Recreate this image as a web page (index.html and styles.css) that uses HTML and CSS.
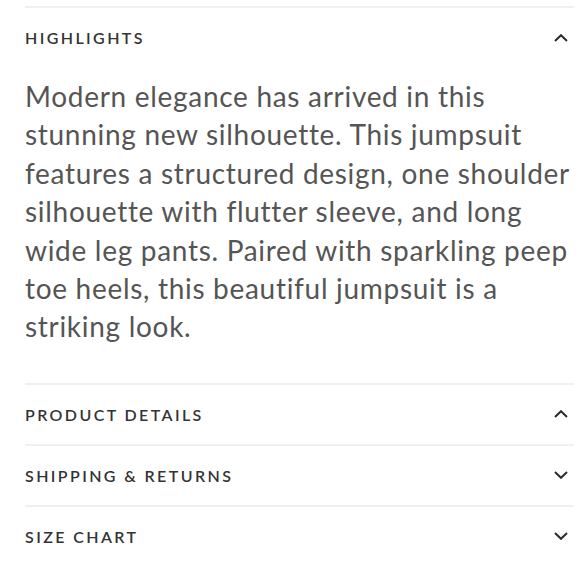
FILE: index.html
```html
<!DOCTYPE html>
<html>
<head>
<meta charset="utf-8">
<link rel="stylesheet" href="styles.css">
</head>
<body>
<div class="accordion">
  <section class="item open">
    <div class="item-head">
      <span class="item-title">HIGHLIGHTS</span>
      <svg class="chev" viewBox="0 0 14 8" width="14" height="8"><path d="M1 7 L7 1.2 L13 7" /></svg>
    </div>
    <div class="item-body">
      <p>Modern elegance has arrived in this stunning new silhouette. This jumpsuit features a structured design, one shoulder silhouette with flutter sleeve, and long wide leg pants. Paired with sparkling peep toe heels, this beautiful jumpsuit is a striking look.</p>
    </div>
  </section>
  <section class="item">
    <div class="item-head">
      <span class="item-title">PRODUCT DETAILS</span>
      <svg class="chev" viewBox="0 0 14 8" width="14" height="8"><path d="M1 7 L7 1.2 L13 7" /></svg>
    </div>
  </section>
  <section class="item">
    <div class="item-head">
      <span class="item-title">SHIPPING &amp; RETURNS</span>
      <svg class="chev" viewBox="0 0 14 8" width="14" height="8"><path d="M1 1 L7 6.8 L13 1" /></svg>
    </div>
  </section>
  <section class="item">
    <div class="item-head">
      <span class="item-title">SIZE CHART</span>
      <svg class="chev" viewBox="0 0 14 8" width="14" height="8"><path d="M1 1 L7 6.8 L13 1" /></svg>
    </div>
  </section>
</div>
</body>
</html>
```
FILE: styles.css
```css
html, body {
  margin: 0;
  padding: 0;
  background: #fff;
}
body {
  padding-top: 6px;
}
.accordion {
  margin-left: 25px;
  width: 549px;
  font-family: "Lato", "Noto Sans", sans-serif;
}
.item {
  border-top: 2px solid #f0f0f0;
}
.item-head {
  height: 59px;
  display: flex;
  align-items: center;
  justify-content: space-between;
  padding-right: 6px;
}
.item-title {
  font-size: 16px;
  font-weight: 600;
  letter-spacing: 2.4px;
  color: #333;
}
.chev {
  fill: none;
  stroke: #2b2b2b;
  stroke-width: 2;
}
.item-body {
  padding-top: 10px;
  padding-bottom: 37px;
}
.item-body p {
  margin: 0;
  font-size: 28px;
  line-height: 38.4px;
  letter-spacing: 0.7px;
  color: #555;
}
```
